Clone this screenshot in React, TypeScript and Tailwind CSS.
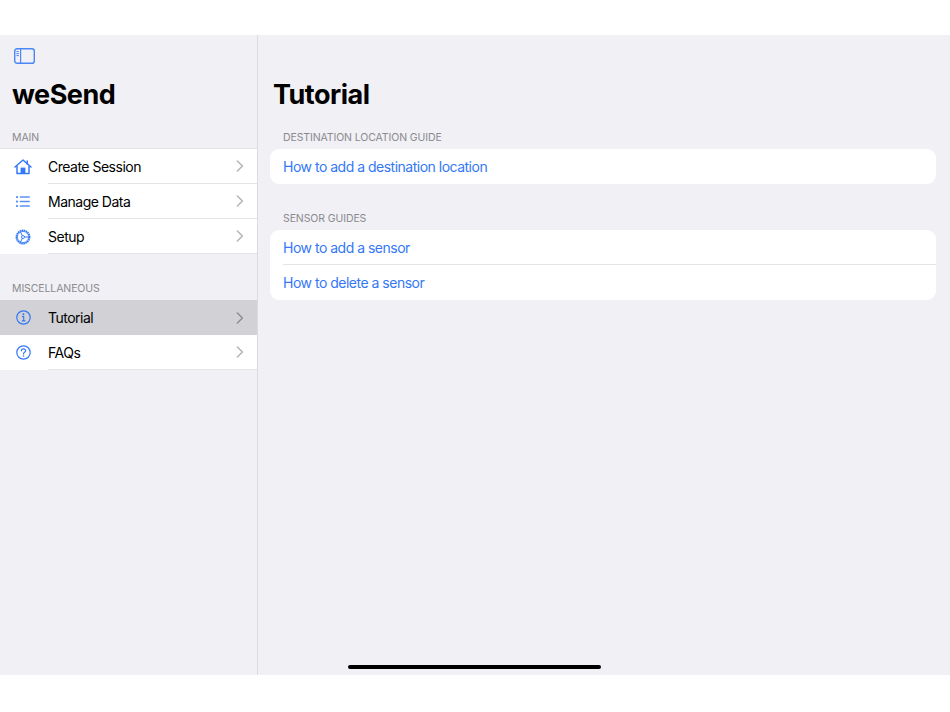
const FONT = "font-['Inter','Liberation_Sans',sans-serif]"

function Chevron({ active }: { active?: boolean }) {
  return (
    <svg width="8" height="12" viewBox="0 0 8 12" fill="none" className="shrink-0">
      <path d="M1.4 1 6.4 6 1.4 11" stroke={active ? '#8e8e93' : '#b4b4b8'} strokeWidth="1.5" strokeLinecap="round" strokeLinejoin="round" />
    </svg>
  )
}

function HomeIcon() {
  return (
    <svg width="18" height="16" viewBox="0 0 18 16" fill="none">
      <path d="M1 8 9 1l8 7" stroke="#3478f6" strokeWidth="1.5" strokeLinecap="round" strokeLinejoin="round" />
      <path d="M3 7v7.4h12V7" stroke="#3478f6" strokeWidth="1.5" strokeLinejoin="round" />
      <path d="M13.2 2v3" stroke="#3478f6" strokeWidth="1.5" strokeLinecap="round" />
      <rect x="6.6" y="8.6" width="4.8" height="6" fill="#3478f6" />
    </svg>
  )
}

function ListIcon() {
  return (
    <svg width="14" height="11" viewBox="0 0 14 11" fill="#5b92f7">
      <rect x="0" y="0" width="2" height="2" rx="0.5" />
      <rect x="0" y="4.5" width="2" height="2" rx="0.5" />
      <rect x="0" y="9" width="2" height="2" rx="0.5" />
      <rect x="3.6" y="0.2" width="10.4" height="1.5" rx="0.7" />
      <rect x="3.6" y="4.7" width="10.4" height="1.5" rx="0.7" />
      <rect x="3.6" y="9.2" width="10.4" height="1.5" rx="0.7" />
    </svg>
  )
}

function GearIcon() {
  return (
    <svg width="16" height="16" viewBox="0 0 16 16" fill="none" stroke="#3478f6">
      <circle cx="8" cy="8" r="6.6" strokeWidth="1.7" strokeDasharray="1.6 0.5" />
      <circle cx="8" cy="8" r="5.6" strokeWidth="0.8" />
      <path d="M5.4 2.8 8 8l-2.6 5.2M8 8h5.6" strokeWidth="1" />
      <circle cx="8" cy="8" r="1.5" strokeWidth="0.9" fill="#fff" />
    </svg>
  )
}

function InfoIcon() {
  return (
    <svg width="15" height="15" viewBox="0 0 15 15" fill="none">
      <circle cx="7.5" cy="7.5" r="6.7" stroke="#3478f6" strokeWidth="1.2" />
      <circle cx="7.4" cy="4.3" r="1" fill="#3478f6" />
      <path d="M6 6.6h1.7v4.2M5.8 10.9h3.6" stroke="#3478f6" strokeWidth="1.1" />
    </svg>
  )
}

function HelpIcon() {
  return (
    <svg width="15" height="15" viewBox="0 0 15 15" fill="none">
      <circle cx="7.5" cy="7.5" r="6.7" stroke="#3478f6" strokeWidth="1.2" />
      <path d="M5.4 5.8c0-1.3 1-2 2.1-2s2.1.7 2.1 1.9c0 1.7-2.1 1.6-2.1 3.3" stroke="#3478f6" strokeWidth="1.2" strokeLinecap="round" />
      <circle cx="7.5" cy="11" r="0.8" fill="#3478f6" />
    </svg>
  )
}

function SidebarIcon() {
  return (
    <svg width="21" height="16" viewBox="0 0 21 16" fill="none">
      <rect x="0.7" y="0.7" width="19.6" height="14.6" rx="2.4" stroke="#4a86f6" strokeWidth="1.4" />
      <path d="M6.6 0.6v14.8" stroke="#4a86f6" strokeWidth="1.2" />
      <path d="M2.4 3.6h2.4M2.4 5.6h2.4M2.4 7.6h2.4" stroke="#4a86f6" strokeWidth="1" />
    </svg>
  )
}

const MAIN_ITEMS = [
  { icon: <HomeIcon />, label: 'Create Session' },
  { icon: <ListIcon />, label: 'Manage Data' },
  { icon: <GearIcon />, label: 'Setup' },
]

const MISC_ITEMS = [
  { icon: <InfoIcon />, label: 'Tutorial', active: true },
  { icon: <HelpIcon />, label: 'FAQs' },
]

function SideRow({ icon, label, active }: { icon: React.ReactNode; label: string; active?: boolean }) {
  return (
    <div className={`flex h-[35px] items-stretch ${active ? 'bg-[#d1d1d6]' : 'bg-white'}`}>
      <div className="flex w-12 shrink-0 items-center justify-center pr-[2px]">{icon}</div>
      <div className={`flex flex-1 items-center justify-between pr-[13px] ${active ? '' : 'border-b border-[#e4e4e7]'}`}>
        <span className="text-[14px] tracking-[-0.5px] text-black">{label}</span>
        <Chevron active={active} />
      </div>
    </div>
  )
}

function SectionLabel({ children }: { children: React.ReactNode }) {
  return <div className="text-[10.5px] leading-[13px] tracking-[-0.1px] text-[#8a8a8e]">{children}</div>
}

function GuideRow({ label, divider }: { label: string; divider?: boolean }) {
  return (
    <div className={`flex h-[35px] items-center text-[14px] tracking-[-0.5px] text-[#3478f6] ${divider ? 'border-b border-[#e4e4e7]' : ''}`}>
      {label}
    </div>
  )
}

export default function App() {
  return (
    <div className={`${FONT} flex h-[712px] w-[950px] flex-col bg-white`}>
      <div className="h-[35px] shrink-0" />
      <div className="relative flex h-[640px] bg-[#f1f0f5]">
        {/* Sidebar */}
        <aside className="flex w-[258px] shrink-0 flex-col border-r border-[#dcdce0]">
          <div className="pl-[14px] pt-[13px]">
            <SidebarIcon />
          </div>
          <h1 className="mt-[14px] pl-3 text-[27px] leading-[34px] font-bold tracking-[-0.5px] text-black">weSend</h1>
          <div className="mt-[19px] pb-[4px] pl-3">
            <SectionLabel>MAIN</SectionLabel>
          </div>
          <div className="border-t border-[#e4e4e7]">
            {MAIN_ITEMS.map((item) => (
              <SideRow key={item.label} icon={item.icon} label={item.label} />
            ))}
          </div>
          <div className="mt-[28px] pb-[5px] pl-3">
            <SectionLabel>MISCELLANEOUS</SectionLabel>
          </div>
          <div>
            {MISC_ITEMS.map((item) => (
              <SideRow key={item.label} icon={item.icon} label={item.label} active={item.active} />
            ))}
          </div>
        </aside>

        {/* Detail */}
        <main className="flex-1 pl-3 pr-[14px]">
          <h2 className="mt-[43px] pl-[3px] text-[27px] leading-[34px] font-bold tracking-[-0.5px] text-black">Tutorial</h2>
          <div className="mt-[19px] pb-[5px] pl-[13px]">
            <SectionLabel>DESTINATION LOCATION GUIDE</SectionLabel>
          </div>
          <div className="rounded-[9px] bg-white pl-[13px]">
            <GuideRow label="How to add a destination location" />
          </div>
          <div className="mt-[28px] pb-[5px] pl-[13px]">
            <SectionLabel>SENSOR GUIDES</SectionLabel>
          </div>
          <div className="rounded-[9px] bg-white pl-[13px]">
            <GuideRow label="How to add a sensor" divider />
            <GuideRow label="How to delete a sensor" />
          </div>
        </main>

        {/* Home indicator */}
        <div className="absolute bottom-[6px] left-[348px] h-[4px] w-[253px] rounded-full bg-black" />
      </div>
    </div>
  )
}
